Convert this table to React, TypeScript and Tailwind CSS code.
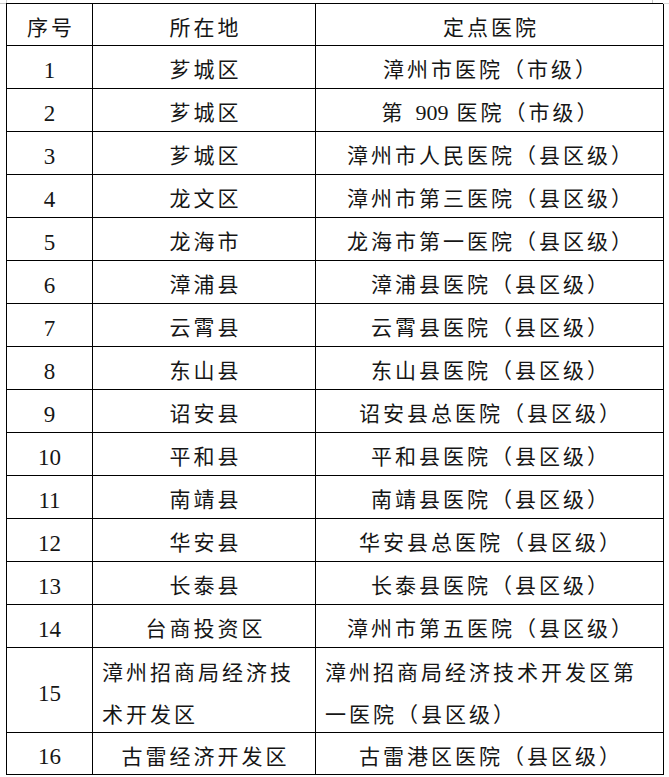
import React from "react";

const rows: [string, string, React.ReactNode][] = [
  ["1", "芗城区", "漳州市医院（市级）"],
  ["2", "芗城区", <>第<span className="tracking-normal text-[22px] ml-[10px] mr-[8px]">909</span>医院（市级）</>],
  ["3", "芗城区", "漳州市人民医院（县区级）"],
  ["4", "龙文区", "漳州市第三医院（县区级）"],
  ["5", "龙海市", "龙海市第一医院（县区级）"],
  ["6", "漳浦县", "漳浦县医院（县区级）"],
  ["7", "云霄县", "云霄县医院（县区级）"],
  ["8", "东山县", "东山县医院（县区级）"],
  ["9", "诏安县", "诏安县总医院（县区级）"],
  ["10", "平和县", "平和县医院（县区级）"],
  ["11", "南靖县", "南靖县医院（县区级）"],
  ["12", "华安县", "华安县总医院（县区级）"],
  ["13", "长泰县", "长泰县医院（县区级）"],
  ["14", "台商投资区", "漳州市第五医院（县区级）"],
];

const cell =
  "border-r border-b border-black flex items-center justify-center pt-[6px] pl-[3px] whitespace-nowrap";
const num =
  "border-r border-b border-black flex items-center justify-center pt-[7px] whitespace-nowrap tracking-normal text-[23px]";

export default function App() {
  return (
    <div className="relative w-[669px] h-[777px] bg-white text-[#161616] font-['Liberation_Serif','Noto_Sans_CJK_SC',serif] text-[21px] tracking-[3px] leading-[42px]">
      {/* corner marks */}
      <div className="absolute left-0 top-[3px] w-[6px] h-px bg-[#c8c8c8]" />
      <div className="absolute left-[6px] top-0 w-px h-[3px] bg-[#c8c8c8]" />
      <div className="absolute left-[652px] top-0 w-px h-[3px] bg-[#c8c8c8]" />
      <div className="absolute left-[663px] top-[3px] w-[6px] h-px bg-[#d8d8d8]" />

      <div className="pt-[3px] pl-[6px]">
        <div className="grid grid-cols-[86px_223px_348px] border-l border-t border-black w-[658px]">
          <div className={`${cell} h-[42px]`}>序号</div>
          <div className={`${cell} h-[42px]`}>所在地</div>
          <div className={`${cell} h-[42px]`}>定点医院</div>

          {rows.map(([n, a, b]) => (
            <React.Fragment key={n}>
              <div className={`${num} h-[43px]`}>{n}</div>
              <div className={`${cell} h-[43px]`}>{a}</div>
              <div className={`${cell} h-[43px]`}>{b}</div>
            </React.Fragment>
          ))}

          <div className={`${num} h-[85px]`}>15</div>
          <div className="border-r border-b border-black h-[85px] flex flex-col justify-center pt-[8px] pl-[9px] whitespace-nowrap">
            <span>漳州招商局经济技</span>
            <span>术开发区</span>
          </div>
          <div className="border-r border-b border-black h-[85px] flex flex-col justify-center pt-[8px] pl-[9px] whitespace-nowrap">
            <span>漳州招商局经济技术开发区第</span>
            <span>一医院（县区级）</span>
          </div>

          <div className={`${num} h-[42px]`}>16</div>
          <div className={`${cell} h-[42px]`}>古雷经济开发区</div>
          <div className={`${cell} h-[42px]`}>古雷港区医院（县区级）</div>
        </div>
      </div>
    </div>
  );
}
